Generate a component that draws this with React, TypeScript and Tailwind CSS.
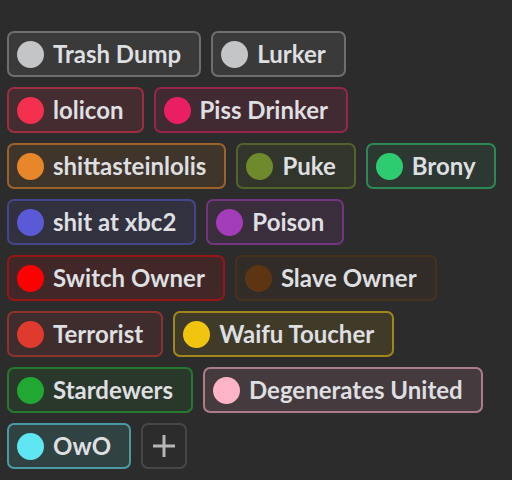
import React from 'react';

type Role = {
    name: string;
    dot: string;
    pill: string;
};

const rows: Role[][] = [
    [
        { name: 'Trash Dump', dot: 'bg-[#c4c5c7]', pill: 'border-[#6e6e6e] bg-[#3a3a3a]' },
        { name: 'Lurker', dot: 'bg-[#c4c5c7]', pill: 'border-[#6e6e6e] bg-[#3a3a3a]' },
    ],
    [
        { name: 'lolicon', dot: 'bg-[#f5304f]', pill: 'border-[#f5304f]/50 bg-[#f5304f]/12' },
        { name: 'Piss Drinker', dot: 'bg-[#e91e63]', pill: 'border-[#e91e63]/50 bg-[#e91e63]/12' },
    ],
    [
        { name: 'shittasteinlolis', dot: 'bg-[#e8862a]', pill: 'border-[#e8862a]/55 bg-[#e8862a]/10' },
        { name: 'Puke', dot: 'bg-[#6e8a2c]', pill: 'border-[#6e8a2c]/55 bg-[#6e8a2c]/10' },
        { name: 'Brony', dot: 'bg-[#2ecc71]', pill: 'border-[#2ecc71]/55 bg-[#2ecc71]/8' },
    ],
    [
        { name: 'shit at xbc2', dot: 'bg-[#5a5ad6]', pill: 'border-[#5a5ad6]/50 bg-[#5a5ad6]/12' },
        { name: 'Poison', dot: 'bg-[#a33cb8]', pill: 'border-[#a33cb8]/55 bg-[#a33cb8]/12' },
    ],
    [
        { name: 'Switch Owner', dot: 'bg-[#ff0000]', pill: 'border-[#ff0000]/45 bg-[#ff0000]/10' },
        { name: 'Slave Owner', dot: 'bg-[#5e3512]', pill: 'border-[#5e3512]/50 bg-[#5e3512]/12' },
    ],
    [
        { name: 'Terrorist', dot: 'bg-[#e03a2e]', pill: 'border-[#e03a2e]/50 bg-[#e03a2e]/10' },
        { name: 'Waifu Toucher', dot: 'bg-[#f1c40f]', pill: 'border-[#f1c40f]/55 bg-[#f1c40f]/10' },
    ],
    [
        { name: 'Stardewers', dot: 'bg-[#20a832]', pill: 'border-[#20a832]/60 bg-[#20a832]/10' },
        { name: 'Degenerates United', dot: 'bg-[#ffb3c6]', pill: 'border-[#ffb3c6]/55 bg-[#ffb3c6]/12' },
    ],
    [{ name: 'OwO', dot: 'bg-[#5ee6f2]', pill: 'border-[#5ee6f2]/55 bg-[#5ee6f2]/12' }],
];

const RolePill: React.FC<{ role: Role }> = ({ role }) => (
    <div className={`flex h-[46px] items-center gap-[9px] rounded-[7px] border-2 pl-[8px] pr-[18px] ${role.pill}`}>
        <span className={`h-[27px] w-[27px] rounded-full ${role.dot}`} />
        <span className="text-[24px] font-bold leading-none text-[#dedfe0]">{role.name}</span>
    </div>
);

const App: React.FC = () => {
    return (
        <div className="h-[480px] w-[512px] overflow-hidden bg-[#2c2c2c] pl-[7px] pt-[31px]" style={{ fontFamily: 'Lato, "Liberation Sans", sans-serif' }}>
            <div className="flex flex-col gap-[10px]">
                {rows.map((row, i) => (
                    <div key={i} className="flex gap-[10px]">
                        {row.map((role) => (
                            <RolePill key={role.name} role={role} />
                        ))}
                        {i === rows.length - 1 && (
                            <button className="flex h-[46px] w-[46px] items-center justify-center rounded-[7px] border-2 border-[#474747]">
                                <svg width="24" height="24" viewBox="0 0 24 24" fill="none" stroke="#b5b6b8" strokeWidth="3">
                                    <path d="M12 1v22M1 12h22" />
                                </svg>
                            </button>
                        )}
                    </div>
                ))}
            </div>
        </div>
    );
};

export default App;
